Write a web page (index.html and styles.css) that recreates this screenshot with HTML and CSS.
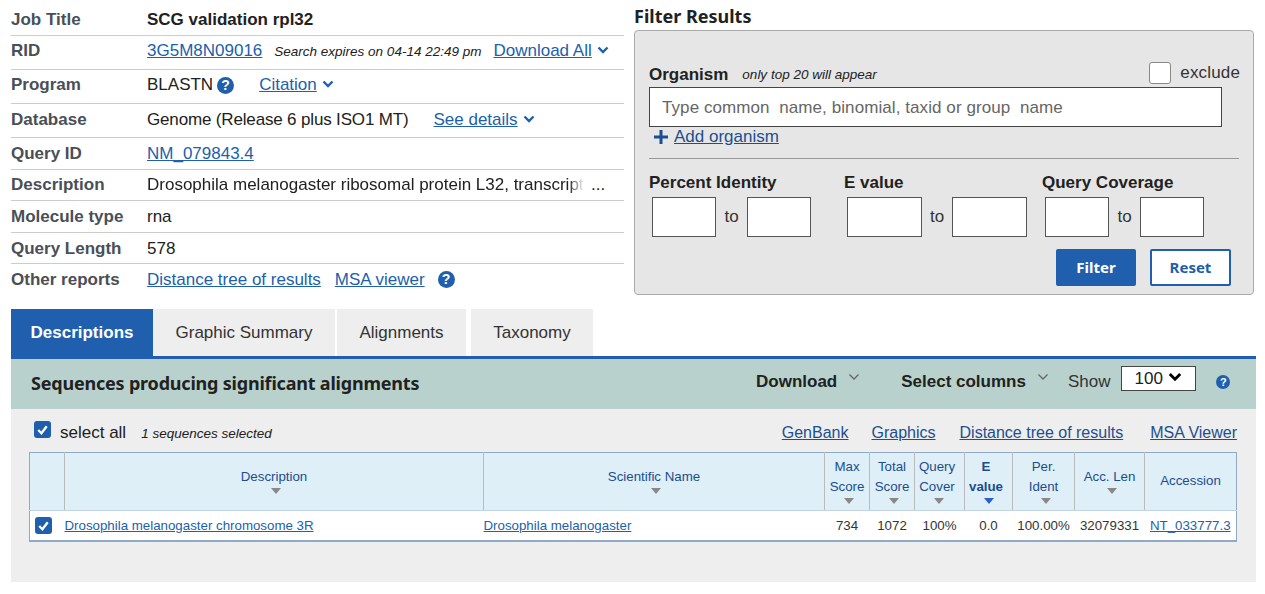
FILE: index.html
```html
<!doctype html>
<html lang="en">
<head>
  <meta charset="UTF-8">
  <title>BLAST Results</title>
  <link rel="stylesheet" href="styles.css">
</head>
<body>
  <div class="top">
    <div class="summary">
      <div class="row row-title"><span class="key">Job Title</span><strong class="job">SCG validation rpl32</strong></div>
      <div class="row row-rid">
        <span class="key">RID</span>
        <a href="#">3G5M8N09016</a>
        <em class="expires">Search expires on 04-14 22:49 pm</em>
        <a href="#" class="dl-all">Download All</a>
        <svg class="chev" viewBox="0 0 12 8"><path d="M1.5 1.5 6 6l4.5-4.5"/></svg>
      </div>
      <div class="row row-program">
        <span class="key">Program</span>
        <span>BLASTN</span><span class="help help-inline">?</span>
        <a href="#" class="citation">Citation</a>
        <svg class="chev" viewBox="0 0 12 8"><path d="M1.5 1.5 6 6l4.5-4.5"/></svg>
      </div>
      <div class="row row-db">
        <span class="key">Database</span>
        <span class="db-name">Genome (Release 6 plus ISO1 MT)</span>
        <a href="#" class="details">See details</a>
        <svg class="chev" viewBox="0 0 12 8"><path d="M1.5 1.5 6 6l4.5-4.5"/></svg>
      </div>
      <div class="row row-query"><span class="key">Query ID</span><a href="#">NM_079843.4</a></div>
      <div class="row row-short">
        <span class="key">Description</span>
        <span class="clip">Drosophila melanogaster ribosomal protein L32, transcript</span>
        <span class="more">...</span>
      </div>
      <div class="row row-short2"><span class="key">Molecule type</span><span>rna</span></div>
      <div class="row row-short row-len"><span class="key">Query Length</span><span>578</span></div>
      <div class="row row-last">
        <span class="key">Other reports</span>
        <a href="#">Distance tree of results</a>
        <a href="#" class="msa">MSA viewer</a>
        <span class="help help-msa">?</span>
      </div>
    </div>

    <div class="filter">
      <h2>Filter Results</h2>
      <div class="filter-box">
        <div class="org-head">
          <strong class="flabel">Organism</strong>
          <em class="org-note">only top 20 will appear</em>
          <span class="exclude"><span class="empty-check"></span>exclude</span>
        </div>
        <div class="org-input">Type common&nbsp; name, binomial, taxid or group&nbsp; name</div>
        <div class="add-org">
          <svg class="plus" viewBox="0 0 16 16"><path d="M8 1v14M1 8h14"/></svg>
          <a href="#">Add organism</a>
        </div>
        <hr class="divider">
        <div class="ranges">
          <div class="range range-pct">
            <strong class="flabel">Percent Identity</strong>
            <div class="pair"><span class="box"></span><span class="to">to</span><span class="box"></span></div>
          </div>
          <div class="range range-ev">
            <strong class="flabel">E value</strong>
            <div class="pair"><span class="box box-wide"></span><span class="to">to</span><span class="box box-wide"></span></div>
          </div>
          <div class="range range-cov">
            <strong class="flabel">Query Coverage</strong>
            <div class="pair"><span class="box"></span><span class="to">to</span><span class="box"></span></div>
          </div>
        </div>
        <div class="actions">
          <button class="btn btn-filter">Filter</button>
          <button class="btn btn-reset">Reset</button>
        </div>
      </div>
    </div>
  </div>

  <div class="tabs">
    <a class="tab tab-active tab-desc">Descriptions</a>
    <a class="tab tab-graphic">Graphic Summary</a>
    <a class="tab tab-align">Alignments</a>
    <a class="tab tab-tax">Taxonomy</a>
  </div>

  <div class="panel">
    <div class="panel-head">
      <h3>Sequences producing significant alignments</h3>
      <strong class="tool">Download</strong>
      <svg class="thin-chev chev-dl" viewBox="0 0 12 8"><path d="M1.5 1.5 6 6l4.5-4.5"/></svg>
      <strong class="tool tool-cols">Select columns</strong>
      <svg class="thin-chev chev-cols" viewBox="0 0 12 8"><path d="M1.5 1.5 6 6l4.5-4.5"/></svg>
      <span class="show">Show</span>
      <span class="select">100<svg viewBox="0 0 12 8"><path d="M1.5 1.5 6 6l4.5-4.5"/></svg></span>
      <span class="help help-head">?</span>
    </div>

    <div class="panel-body">
      <div class="select-row">
        <span class="tick tick-all"><svg viewBox="0 0 16 16"><path d="M4 8.5 7 11.5 12 5"/></svg></span>
        <span class="select-all">select all</span>
        <em class="selected">1 sequences selected</em>
        <span class="links">
          <a href="#">GenBank</a>
          <a href="#">Graphics</a>
          <a href="#" class="link-tree">Distance tree of results</a>
          <a href="#" class="link-msa">MSA Viewer</a>
        </span>
      </div>

      <table class="results">
        <colgroup>
          <col class="c-check"><col class="c-desc"><col class="c-sci"><col class="c-max"><col class="c-total">
          <col class="c-cover"><col class="c-e"><col class="c-ident"><col class="c-len"><col class="c-acc">
        </colgroup>
        <thead>
          <tr>
            <th></th>
            <th class="mid">Description<i class="sort"></i></th>
            <th class="mid">Scientific Name<i class="sort"></i></th>
            <th>Max<br>Score<i class="sort"></i></th>
            <th>Total<br>Score<i class="sort"></i></th>
            <th class="shift">Query<br>Cover<i class="sort"></i></th>
            <th class="active shift">E<br>value<i class="sort"></i></th>
            <th>Per.<br>Ident<i class="sort"></i></th>
            <th class="mid">Acc. Len<i class="sort"></i></th>
            <th class="plain">Accession</th>
          </tr>
        </thead>
        <tbody>
          <tr>
            <td class="cell-check"><span class="tick"><svg viewBox="0 0 16 16"><path d="M4 8.5 7 11.5 12 5"/></svg></span></td>
            <td class="left"><a href="#">Drosophila melanogaster chromosome 3R</a></td>
            <td class="left"><a href="#">Drosophila melanogaster</a></td>
            <td>734</td>
            <td>1072</td>
            <td>100%</td>
            <td>0.0</td>
            <td>100.00%</td>
            <td>32079331</td>
            <td><a href="#">NT_033777.3</a></td>
          </tr>
        </tbody>
      </table>
    </div>
  </div>
</body>
</html>
```

FILE: styles.css
```css
*{
  box-sizing: border-box;
}

body{
  margin: 0;
  color: #212121;
  font-family: "Liberation Sans", Arial, sans-serif;
  font-size: 17px;
  background-color: #fff;
}

a{
  color: #205fad;
  text-decoration: underline;
}

/* top area */
.top{
  display: flex;
  height: 309px;
  padding-left: 11px;
}

.summary{
  width: 613px;
}

.row{
  display: flex;
  align-items: center;
  border-bottom: 1px solid #ccc;
}

.row-title{ height: 36px; padding-top: 4px; }
.row-rid{ height: 34px; padding-bottom: 3px; }
.row-program{ height: 34px; padding-bottom: 3px; }
.row-db{ height: 34px; padding-bottom: 2px; }
.row-query{ height: 32px; }
.row-short{ height: 31px; }
.row-short2{ height: 32px; }
.row-len{ padding-top: 2px; }
.row-last{ height: 31px; border-bottom: 0; }

.key{
  flex: none;
  width: 136px;
  color: #4a4f57;
  font-weight: 700;
}

.job{
  font-weight: 700;
}

.expires{
  margin-left: 12px;
  font-size: 13.5px;
}

.dl-all{
  margin-left: 12px;
}

.chev{
  width: 12px;
  height: 8px;
  margin: -2px 0 0 5px;
  fill: none;
  stroke: #205fad;
  stroke-width: 2.4;
}

.citation{
  margin-left: 25px;
}

.db-name{
  letter-spacing: -.16px;
}

.details{
  margin-left: 25px;
}

.clip{
  width: 437px;
  overflow: hidden;
  white-space: nowrap;
  -webkit-mask-image: linear-gradient(to right, #000 422px, transparent 437px);
  mask-image: linear-gradient(to right, #000 422px, transparent 437px);
}

.more{
  margin-left: 7px;
}

.msa{
  margin-left: 14px;
}

.help{
  display: inline-block;
  width: 17px;
  height: 17px;
  border-radius: 50%;
  color: #fff;
  font-size: 14px;
  font-weight: 700;
  line-height: 17px;
  text-align: center;
  background: #205fad;
}

.help-inline{
  margin-left: 4px;
}

.help-msa{
  margin-left: 13px;
}

/* filter box */
.filter{
  width: 620px;
  margin-left: 10px;
}

.filter h2{
  margin: 5px 0 1px;
  height: 24px;
  color: #212121;
  font-family: "Noto Sans", sans-serif;
  font-size: 18px;
  font-weight: 700;
  line-height: 22px;
}

.filter-box{
  height: 265px;
  padding: 31px 14px 0;
  border: 1px solid #aaa;
  border-radius: 4px;
  background: #e6e6e6;
}

.org-head{
  display: flex;
  align-items: center;
  height: 25px;
}

.flabel{
  color: #212121;
  font-weight: 700;
}

.org-note{
  margin-left: 14px;
  font-size: 13.5px;
}

.exclude{
  display: flex;
  align-items: center;
  margin: -4px -1px 0 auto;
  color: #333;
  letter-spacing: .15px;
}

.empty-check{
  width: 22px;
  height: 22px;
  margin-right: 9px;
  border: 1px solid #888;
  border-radius: 3px;
  background: #fff;
}

.org-input{
  width: 573px;
  height: 40px;
  padding-left: 12px;
  border: 1px solid #444;
  color: #666;
  letter-spacing: .08px;
  line-height: 40px;
  background: #fff;
}

.add-org{
  display: flex;
  align-items: center;
  height: 19px;
  padding-left: 4px;
}

.add-org a{
  color: #1c4f91;
}

.plus{
  width: 16px;
  height: 16px;
  margin-right: 5px;
  fill: none;
  stroke: #1c4f91;
  stroke-width: 3;
}

.divider{
  width: 590px;
  height: 1px;
  margin: 12px 0 15px;
  border: 0;
  background: #999;
}

.ranges{
  display: flex;
  height: 69px;
}

.range{
  display: flex;
  flex-direction: column;
}

.range .flabel{
  height: 16px;
  line-height: 18px;
}

.range-pct{ width: 195px; }
.range-ev{ width: 198px; }

.pair{
  display: flex;
  align-items: center;
  margin: 7px 0 0 3px;
}

.box{
  width: 64px;
  height: 40px;
  border: 1px solid #555;
  background: #fff;
}

.box-wide{
  width: 75px;
}

.to{
  width: 31px;
  color: #333;
  text-align: center;
}

.range-ev .to{
  width: 30px;
}

.actions{
  display: flex;
  justify-content: flex-end;
  gap: 14px;
  margin: 6px 8px 0 0;
}

.btn{
  width: 81px;
  height: 37px;
  padding: 0 0 2px;
  border: 2px solid #205fad;
  border-radius: 2px;
  font-family: "Noto Sans", sans-serif;
  font-size: 15px;
  font-weight: 700;
}

.btn-filter{
  width: 80px;
  color: #fff;
  background: #205fad;
}

.btn-reset{
  color: #205fad;
  background: #fff;
}

/* tabs */
.tabs{
  display: flex;
  height: 47px;
  margin-left: 11px;
}

.tab{
  height: 47px;
  color: #333;
  line-height: 47px;
  text-align: center;
  text-decoration: none;
  background: #eee;
}

.tab-active{
  color: #fff;
  font-weight: 700;
  background: #205fad;
}

.tab-desc{ width: 142px; }
.tab-graphic{ width: 182px; margin-right: 2px; }
.tab-align{ width: 129px; margin-right: 5px; }
.tab-tax{ width: 122px; }

/* results panel */
.panel{
  width: 1245px;
  margin-left: 11px;
  border-top: 3px solid #205fad;
}

.panel-head{
  display: flex;
  align-items: center;
  height: 50px;
  padding-left: 20px;
  background: #b8d1cd;
}

.panel-head h3{
  width: 725px;
  margin: 0 0 2px;
  color: #212121;
  font-family: "Noto Sans", sans-serif;
  font-size: 18px;
  font-weight: 700;
  letter-spacing: -.2px;
}

.tool{
  margin-bottom: 4px;
  color: #212121;
  font-weight: 700;
}

.tool-cols{
  margin-left: 41px;
}

.thin-chev{
  width: 12px;
  height: 8px;
  margin: -14px 0 0 11px;
  fill: none;
  stroke: #666;
  stroke-width: 1.3;
}

.show{
  margin: 0 0 4px 19px;
  color: #333;
}

.select{
  display: flex;
  align-items: center;
  width: 75px;
  height: 25px;
  margin: -11px 0 0 11px;
  padding-left: 12px;
  border: 1px solid #444;
  background: #fff;
}

.select svg{
  width: 14px;
  height: 10px;
  margin: -4px 0 0 5px;
  fill: none;
  stroke: #000;
  stroke-width: 2.4;
}

.help-head{
  width: 14px;
  height: 14px;
  margin: -4px 0 0 20px;
  font-size: 11px;
  line-height: 14px;
}

.panel-body{
  height: 173px;
  padding: 0 18px;
  background: #eee;
}

.select-row{
  display: flex;
  align-items: center;
  height: 43px;
  padding: 5px 0 0 5px;
}

.tick{
  display: inline-block;
  width: 17px;
  height: 17px;
  border-radius: 3px;
  background: #205fad;
}

.tick svg{
  display: block;
  fill: none;
  stroke: #fff;
  stroke-width: 2.2;
}

.tick-all{
  margin-top: -7px;
}

.select-all{
  margin-left: 9px;
}

.selected{
  margin-left: 15px;
  font-size: 13.5px;
}

.links{
  display: flex;
  gap: 23px;
  margin: 0 1px 0 auto;
  font-size: 16px;
}

.links a{
  color: #1c4f91;
}

.links .link-tree{
  margin-left: 1px;
}

.links .link-msa{
  margin-left: 4px;
}

.results{
  width: 1207px;
  border: 1px solid #8fa9c9;
  border-bottom-width: 2px;
  border-collapse: collapse;
  table-layout: fixed;
  font-size: 13.3px;
  background: #fff;
}

.c-check{ width: 35px; }
.c-desc{ width: 419px; }
.c-sci{ width: 341px; }
.c-max{ width: 45px; }
.c-total{ width: 45px; }
.c-cover{ width: 50px; }
.c-e{ width: 48px; }
.c-ident{ width: 62px; }
.c-len{ width: 70px; }
.c-acc{ width: 92px; }

.results th{
  height: 58px;
  padding: 4px 0 0;
  border-right: 1px solid #bbb;
  border-bottom: 1px solid #c5d3e0;
  color: #1a4d8f;
  font-weight: 400;
  line-height: 20px;
  text-align: center;
  vertical-align: top;
  background: #dfeff7;
}

.results th:last-child{
  border-right: 0;
}

.results th.mid{
  padding-top: 14px;
}

.results th.plain{
  padding-top: 18px;
}

.results th.active{
  font-weight: 700;
}

.results th.shift{
  padding-right: 5px;
}

.sort{
  display: block;
  width: 0;
  height: 0;
  margin: 1px auto 0;
  border-top: 6px solid #888;
  border-right: 5px solid transparent;
  border-left: 5px solid transparent;
  transform: translateX(2px);
}

.active .sort{
  border-top-color: #2b5fd0;
  transform: translateX(3px);
}

.results td{
  height: 30px;
  padding: 0;
  color: #333;
  text-align: center;
}

.results td.left{
  text-align: left;
}

.results td.cell-check .tick{
  display: block;
  margin: 1px 0 0 5px;
}
```
